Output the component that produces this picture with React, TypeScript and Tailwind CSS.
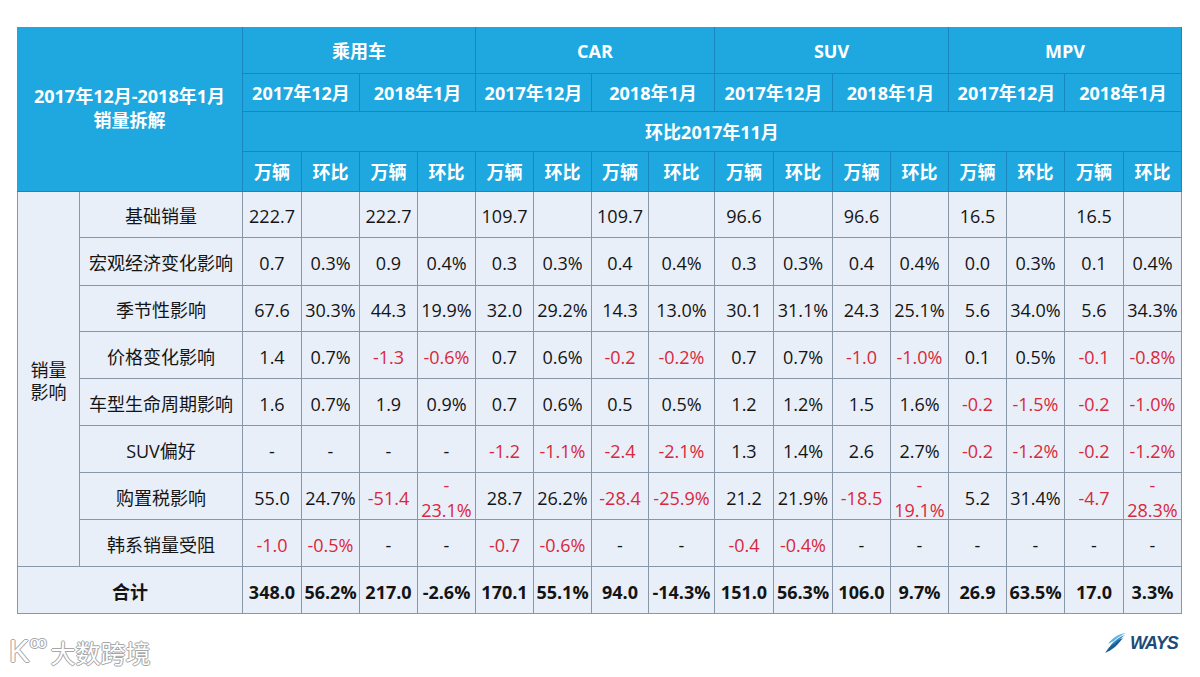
import React from "react";

const groups = ["乘用车", "CAR", "SUV", "MPV"];

const rows: { label: string; v: string[] }[] = [
  { label: "基础销量", v: ["222.7", "", "222.7", "", "109.7", "", "109.7", "", "96.6", "", "96.6", "", "16.5", "", "16.5", ""] },
  { label: "宏观经济变化影响", v: ["0.7", "0.3%", "0.9", "0.4%", "0.3", "0.3%", "0.4", "0.4%", "0.3", "0.3%", "0.4", "0.4%", "0.0", "0.3%", "0.1", "0.4%"] },
  { label: "季节性影响", v: ["67.6", "30.3%", "44.3", "19.9%", "32.0", "29.2%", "14.3", "13.0%", "30.1", "31.1%", "24.3", "25.1%", "5.6", "34.0%", "5.6", "34.3%"] },
  { label: "价格变化影响", v: ["1.4", "0.7%", "-1.3", "-0.6%", "0.7", "0.6%", "-0.2", "-0.2%", "0.7", "0.7%", "-1.0", "-1.0%", "0.1", "0.5%", "-0.1", "-0.8%"] },
  { label: "车型生命周期影响", v: ["1.6", "0.7%", "1.9", "0.9%", "0.7", "0.6%", "0.5", "0.5%", "1.2", "1.2%", "1.5", "1.6%", "-0.2", "-1.5%", "-0.2", "-1.0%"] },
  { label: "SUV偏好", v: ["-", "-", "-", "-", "-1.2", "-1.1%", "-2.4", "-2.1%", "1.3", "1.4%", "2.6", "2.7%", "-0.2", "-1.2%", "-0.2", "-1.2%"] },
  { label: "购置税影响", v: ["55.0", "24.7%", "-51.4", "-23.1%", "28.7", "26.2%", "-28.4", "-25.9%", "21.2", "21.9%", "-18.5", "-19.1%", "5.2", "31.4%", "-4.7", "-28.3%"] },
  { label: "韩系销量受阻", v: ["-1.0", "-0.5%", "-", "-", "-0.7", "-0.6%", "-", "-", "-0.4", "-0.4%", "-", "-", "-", "-", "-", "-"] },
];

const total = ["348.0", "56.2%", "217.0", "-2.6%", "170.1", "55.1%", "94.0", "-14.3%", "151.0", "56.3%", "106.0", "9.7%", "26.9", "63.5%", "17.0", "3.3%"];

const wrapSet = new Set(["-23.1%", "-19.1%", "-28.3%"]);

const H = "flex items-center justify-center border-r border-b border-[#1a86bf] bg-[#1fa8e0] text-white font-bold text-[18px] pt-[2px]";
const B = "flex items-center justify-center border-r border-b border-[#8797a8] bg-[#e9eff8] text-[18px] text-[#141414]";
const BP = B + " pt-[4px]";

function Val({ s }: { s: string }) {
  const red = /^-\d/.test(s);
  if (wrapSet.has(s)) {
    return (
      <div className={B + " text-[#d8283c] flex-col leading-[25px] pt-[4px]"}>
        <span>-</span>
        <span>{s.slice(1)}</span>
      </div>
    );
  }
  return <div className={BP + (red ? " text-[#d8283c]" : "")}>{s}</div>;
}

export default function App() {
  return (
    <div className="w-[1200px] h-[677px] bg-white relative overflow-hidden font-['Open_Sans','Noto_Sans_CJK_SC',sans-serif]">
      <div className="pl-[17px] pt-[27px]">
        <div className="grid grid-cols-[63px_163px_59px_58px_58px_58px_58px_58px_57px_66px_59px_59px_58px_58px_58px_58px_59px_58px] grid-rows-[47px_38px_40px_40px_46px_48px_46px_47px_47px_47px_47px_47px_47px] w-[1165px]">
          <div className={H + " col-span-2 row-span-4 flex-col leading-[24px] pb-[4px]"}>
            <span>2017年12月-2018年1月</span>
            <span>销量拆解</span>
          </div>
          {groups.map((g) => (
            <div key={g} className={H + " col-span-4"}>{g}</div>
          ))}
          {groups.map((g) => (
            <React.Fragment key={g}>
              <div className={H + " col-span-2"}>2017年12月</div>
              <div className={H + " col-span-2"}>2018年1月</div>
            </React.Fragment>
          ))}
          <div className={H + " col-span-16"}>环比2017年11月</div>
          {Array.from({ length: 8 }).map((_, i) => (
            <React.Fragment key={i}>
              <div className={H}>万辆</div>
              <div className={H}>环比</div>
            </React.Fragment>
          ))}
          <div className={BP + " row-span-8 border-l flex-col leading-[22px]"}>
            <span>销量</span>
            <span>影响</span>
          </div>
          {rows.map((r) => (
            <React.Fragment key={r.label}>
              <div className={BP}>{r.label}</div>
              {r.v.map((s, i) => (
                <Val key={i} s={s} />
              ))}
            </React.Fragment>
          ))}
          <div className={BP + " col-span-2 border-l font-bold"}>合计</div>
          {total.map((s, i) => (
            <div key={i} className={BP + " font-bold"}>{s}</div>
          ))}
        </div>
      </div>

      {/* watermark bottom-left */}
      <div className="absolute left-[9px] top-[636px] flex items-end gap-[6px] text-white [text-shadow:0_0_1px_#9a9a9a,1px_0_0_#a8a8a8,-1px_0_0_#a8a8a8,0_1px_0_#a8a8a8,0_-1px_0_#a8a8a8]">
        <div className="flex items-start">
          <span className="text-[31px] leading-[32px] font-['Liberation_Sans',sans-serif]">K</span>
          <span className="text-[17px] leading-[14px] tracking-[-2px] font-['Liberation_Sans',sans-serif]">oo</span>
        </div>
        <span className="text-[25px] leading-[32px] font-['Noto_Sans_CJK_SC',sans-serif] tracking-[0px]">大数跨境</span>
      </div>

      {/* WAYS logo bottom-right */}
      <div className="absolute left-[1104px] top-[632px] flex items-center gap-[2px]">
        <svg width="24" height="22" viewBox="0 0 24 22">
          <path d="M22 1 C14 2 8 6 4 12 L10 9 C13 6 17 3 22 1 Z" fill="#5fb6e2" />
          <path d="M19 6 C12 8 6 13 1 21 C8 18 12 15 19 6 Z" fill="#1f5d8e" />
          <path d="M21 3 C15 5 10 9 6 14 L10 12 C14 9 17 6 21 3 Z" fill="#2f86c2" />
        </svg>
        <span className="text-[18px] leading-[20px] font-bold italic text-[#1c4c78] tracking-[-1px] font-['Liberation_Sans',sans-serif]">WAYS</span>
      </div>
    </div>
  );
}
